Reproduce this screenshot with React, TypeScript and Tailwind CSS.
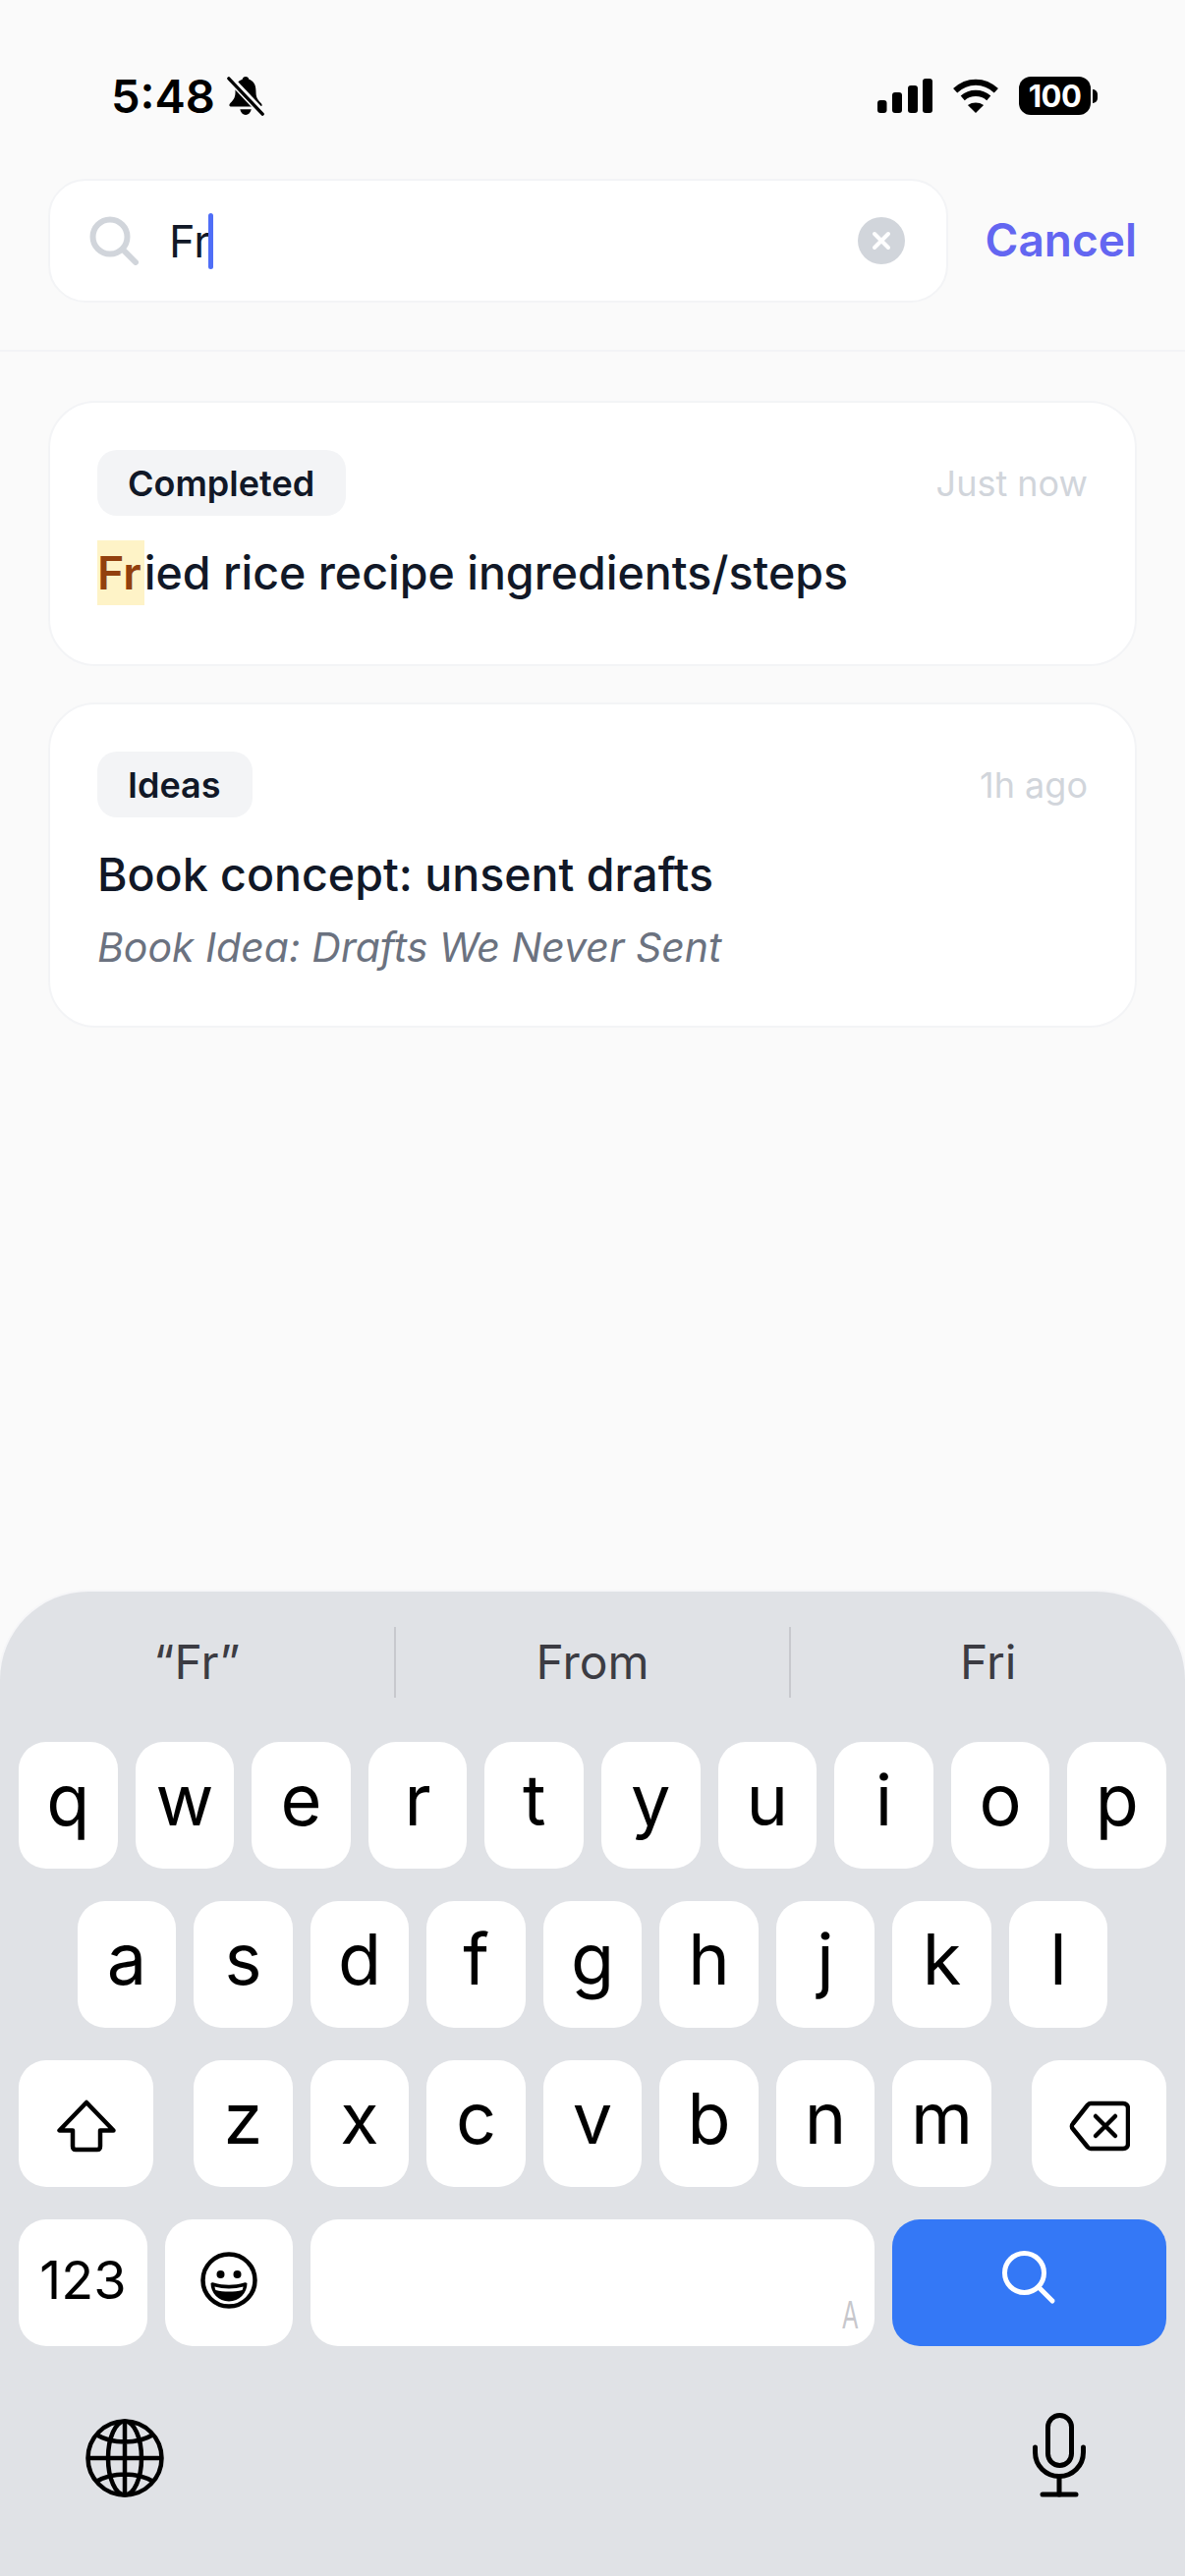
import type { ReactNode } from "react";

const rowOne = ["q", "w", "e", "r", "t", "y", "u", "i", "o", "p"];
const rowTwo = ["a", "s", "d", "f", "g", "h", "j", "k", "l"];
const rowThree = ["z", "x", "c", "v", "b", "n", "m"];

function Key({ children, className = "w-[100.5px] bg-white" }: { children?: ReactNode; className?: string }) {
  return <div className={`relative flex h-[129px] items-center justify-center rounded-[28px] text-black ${className}`}>{children}</div>;
}

function LetterKey({ letter }: { letter: string }) {
  return <Key className="w-[100.5px] bg-white pb-[12px] text-[72px] leading-none">{letter}</Key>;
}

function StatusBar() {
  return (
    <div className="flex h-[182px] items-start justify-between pl-[113px] pr-[89px] pt-[70px]">
      <div className="flex items-center gap-[12px]">
        <span className="font-['Inter'] text-[47px] font-semibold leading-[56px] text-black">5:48</span>
        <svg width="38" height="42" viewBox="0 0 38 44" className="text-black">
          <path d="M19 1c-2 0-3 1-3.500 3C9 6 8 12 8 18c0 6-3 9-6 12-1 2 0 3 2 3h30c2 0 3-1 2-3-3-3-6-6-6-12 0-6-1-12-7.500-14C22 2 21 1 19 1z" fill="currentColor" />
          <path d="M13 36c1 4 3 6 6 6s5-2 6-6z" fill="currentColor" />
          <path d="M1 2l36 38" stroke="#fafafa" strokeWidth="8" />
          <path d="M1 3l36 38" stroke="currentColor" strokeWidth="3.500" strokeLinecap="round" />
        </svg>
      </div>
      <div className="flex items-center gap-[19px] pt-[8px]">
        <svg width="56" height="35" viewBox="0 0 56 35" fill="black">
          <rect x="0" y="22" width="9.500" height="13" rx="3" />
          <rect x="15" y="14" width="10" height="21" rx="3" />
          <rect x="31" y="7" width="10" height="28" rx="3" />
          <rect x="46" y="0" width="10" height="35" rx="3" />
        </svg>
        <svg width="50" height="36" viewBox="0 0 50 38" fill="none" stroke="black" strokeWidth="6.500">
          <path d="M3 13C16 1 34 1 47 13" />
          <path d="M11 21c8-7 20-7 28 0" />
          <path d="M25 37l-8.500-8.500c5-3.500 12-3.500 17 0z" fill="black" stroke="none" />
        </svg>
        <div className="flex items-center">
          <div className="flex h-[39px] w-[73px] items-center justify-center rounded-[12px] bg-black font-['Inter'] text-[31px] font-bold leading-none tracking-[-0.5px] text-white">
            100
          </div>
          <div className="ml-[2px] h-[14px] w-[5px] rounded-r-full bg-black" />
        </div>
      </div>
    </div>
  );
}

function SearchHeader() {
  return (
    <div className="flex items-center gap-[38px] border-b-2 border-[#f3f4f6] pb-[48px] pl-[49px] pr-[49px]">
      <div className="flex h-[126px] flex-1 items-center rounded-[38px] border-2 border-[#f3f4f6] bg-white pl-[40px] pr-[42px]">
        <svg width="50" height="50" viewBox="0 0 50 50" fill="none" stroke="#d1d5db" strokeWidth="6" strokeLinecap="round">
          <circle cx="21" cy="21" r="17.500" />
          <path d="M34 34l13 13" />
        </svg>
        <span className="ml-[31px] font-['Inter'] text-[45px] leading-none text-[#111827]">Fr</span>
        <div className="ml-[-2px] h-[57px] w-[5px] rounded-full bg-[#4f6ef7]" />
        <div className="ml-auto flex h-[48px] w-[48px] items-center justify-center rounded-full bg-[#d1d5db]">
          <svg width="22" height="22" viewBox="0 0 22 22" stroke="white" strokeWidth="4" strokeLinecap="round">
            <path d="M4 4l14 14M18 4L4 18" />
          </svg>
        </div>
      </div>
      <span className="pb-[2px] font-['Inter'] text-[46px] font-semibold leading-none text-[#6366f1]">Cancel</span>
    </div>
  );
}

function Tag({ label }: { label: string }) {
  return (
    <span className="flex h-[67px] items-center rounded-[20px] bg-[#f3f4f6] pl-[31px] pr-[32px] font-['Inter'] text-[36px] font-semibold leading-none text-[#111827]">
      {label}
    </span>
  );
}

function Results() {
  return (
    <div className="flex flex-col gap-[37px] px-[49px] pt-[50px]">
      <div className="h-[270px] rounded-[48px] border-2 border-[#f3f4f6] bg-white px-[48px] pt-[48px]">
        <div className="flex items-center justify-between">
          <Tag label="Completed" />
          <span className="font-['Inter'] text-[36px] leading-none text-[#d1d5db]">Just now</span>
        </div>
        <div className="mt-[25px] font-['Inter'] text-[46.500px] font-medium leading-[66px] text-[#111827]">
          <span className="inline-block bg-[#fef3c7] pr-[3px] font-semibold text-[#92400e]">Fr</span>ied rice recipe ingredients/steps
        </div>
      </div>
      <div className="h-[331px] rounded-[48px] border-2 border-[#f3f4f6] bg-white px-[48px] pt-[48px]">
        <div className="flex items-center justify-between">
          <Tag label="Ideas" />
          <span className="font-['Inter'] text-[36px] leading-none text-[#d1d5db]">1h ago</span>
        </div>
        <div className="mt-[25px] font-['Inter'] text-[46.500px] font-medium leading-[66px] text-[#111827]">Book concept: unsent drafts</div>
        <div className="mt-[16px] font-['Inter'] text-[41px] italic leading-[50px] text-[#6b7280]">Book Idea: Drafts We Never Sent</div>
      </div>
    </div>
  );
}

function Keyboard() {
  return (
    <div className="mt-auto h-[1002px] rounded-t-[90px] bg-[#e0e2e6] font-['Inter'] shadow-[0_0_0_2px_#f6f6f8]">
      <div className="flex h-[153px] items-center pb-[9px] text-[48px] leading-none text-[#3c3c43]">
        <div className="flex flex-1 items-center justify-center">“Fr”</div>
        <div className="h-[72px] w-[2px] bg-[#c8c9ce]" />
        <div className="flex flex-1 items-center justify-center">From</div>
        <div className="h-[72px] w-[2px] bg-[#c8c9ce]" />
        <div className="flex flex-1 items-center justify-center">Fri</div>
      </div>
      <div className="flex flex-col gap-[33px] pl-[19px] pr-[19px]">
        <div className="flex justify-between">
          {rowOne.map((k) => (
            <LetterKey key={k} letter={k} />
          ))}
        </div>
        <div className="flex justify-center gap-[18px]">
          {rowTwo.map((k) => (
            <LetterKey key={k} letter={k} />
          ))}
        </div>
        <div className="flex justify-between">
          <Key className="w-[137px] bg-white pt-[4px]">
            <svg width="62" height="54" viewBox="0 0 62 54" fill="none" stroke="black" strokeWidth="4.500" strokeLinejoin="round">
              <path d="M31 3L3.500 31.500H17v16c0 2 1 3.500 3 3.500h22c2 0 3-1.500 3-3.500v-16h13.500z" />
            </svg>
          </Key>
          <div className="flex gap-[18px]">
            {rowThree.map((k) => (
              <LetterKey key={k} letter={k} />
            ))}
          </div>
          <Key className="w-[137px] bg-white pt-[4px]">
            <svg width="62" height="54" viewBox="0 0 62 54" fill="none" stroke="black" strokeWidth="4.500" strokeLinejoin="round" strokeLinecap="round">
              <path d="M22 4h33c3 0 5 2 5 5v36c0 3-2 5-5 5H22c-1 0-2-.5-3-1.500L4 30c-1.500-1.500-1.500-4 0-5.500L19 5.500C20 4.500 21 4 22 4z" />
              <path d="M27 17l20 20M47 17L27 37" />
            </svg>
          </Key>
        </div>
        <div className="flex gap-[18px]">
          <Key className="w-[131px] bg-white pb-[5px] text-[54px] leading-none">123</Key>
          <Key className="w-[130px] bg-white pb-[5px]">
            <svg width="58" height="58" viewBox="0 0 58 58" fill="none">
              <circle cx="29" cy="29" r="26.500" stroke="black" strokeWidth="4.500" />
              <circle cx="20.500" cy="23" r="4" fill="black" />
              <circle cx="37.500" cy="23" r="4" fill="black" />
              <path d="M10.500 32c1-1 2-1 3-.500 10 3 21 3 31 0 1-.500 2 0 3 .500 0 10-8 18.500-18.500 18.500S10.500 42 10.500 32z" fill="black" />
              <path d="M14.500 35.500c9 2.500 20 2.500 29 0 0 1-.500 2.500-1 3.500-8 2-19 2-27 0-.5-1-1-2.500-1-3.500z" fill="white" />
            </svg>
          </Key>
          <Key className="w-[574px] bg-white">
            <span className="absolute bottom-[12px] right-[11px] scale-x-[0.6] font-['Liberation_Sans'] text-[40px] leading-none text-[#c7c7cc]">A</span>
          </Key>
          <Key className="flex-1 bg-[#3478f6]">
            <svg width="58" height="58" viewBox="0 0 58 58" fill="none" stroke="white" strokeWidth="5" strokeLinecap="round" className="mb-[13px]">
              <circle cx="23.500" cy="25.500" r="20" />
              <path d="M38 40l14 14" />
            </svg>
          </Key>
        </div>
      </div>
      <div className="flex items-start justify-between pl-[87px] pr-[100px] pt-[68px]">
        <svg width="80" height="80" viewBox="0 0 80 80" fill="none" stroke="black" strokeWidth="4.500" className="mt-[6px]">
          <circle cx="40" cy="40" r="37.500" />
          <ellipse cx="40" cy="40" rx="17" ry="37.500" />
          <path d="M40 2v76M2 40h76M11 16c16 10 42 10 58 0M11 64c16-10 42-10 58 0" />
        </svg>
        <svg width="56" height="86" viewBox="0 0 56 86" fill="none" stroke="black" strokeWidth="5" strokeLinecap="round">
          <rect x="16.500" y="2.500" width="24" height="51" rx="12" />
          <path d="M3.500 35v5c0 14 11 24.500 24.500 24.500s24.500-10.500 24.500-24.500v-5" />
          <path d="M28 65v18" />
          <path d="M11 83h34" />
        </svg>
      </div>
    </div>
  );
}

export default function App() {
  return (
    <div className="flex h-[2622px] w-[1206px] flex-col overflow-hidden bg-[#fafafa]">
      <StatusBar />
      <SearchHeader />
      <Results />
      <Keyboard />
    </div>
  );
}
